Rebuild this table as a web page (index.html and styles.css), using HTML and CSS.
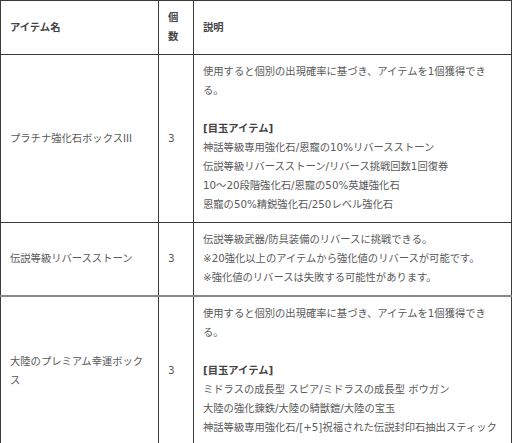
FILE: index.html
```html
<!DOCTYPE html>
<html lang="ja">
<head>
<meta charset="utf-8">
<link rel="stylesheet" href="styles.css">
</head>
<body>
<table class="items">
  <colgroup>
    <col class="c-name">
    <col class="c-qty">
    <col class="c-desc">
  </colgroup>
  <thead>
    <tr>
      <th>アイテム名</th>
      <th>個数</th>
      <th>説明</th>
    </tr>
  </thead>
  <tbody>
    <tr>
      <td>プラチナ強化石ボックスIII</td>
      <td>3</td>
      <td class="desc">使用すると個別の出現確率に基づき、アイテムを1個獲得できる。<br><br><b>[目玉アイテム]</b><br>神話等級専用強化石/恩寵の10%リバースストーン<br>伝説等級リバースストーン/リバース挑戦回数1回復券<br>10～20段階強化石/恩寵の50%英雄強化石<br>恩寵の50%精鋭強化石/250レベル強化石</td>
    </tr>
    <tr>
      <td>伝説等級リバースストーン</td>
      <td>3</td>
      <td class="desc">伝説等級武器/防具装備のリバースに挑戦できる。<br>※20強化以上のアイテムから強化値のリバースが可能です。<br>※強化値のリバースは失敗する可能性があります。</td>
    </tr>
    <tr class="last">
      <td>大陸のプレミアム幸運ボックス</td>
      <td>3</td>
      <td class="desc">使用すると個別の出現確率に基づき、アイテムを1個獲得できる。<br><br><b>[目玉アイテム]</b><br>ミドラスの成長型 スピア/ミドラスの成長型 ボウガン<br>大陸の強化錬鉄/大陸の騎獣鎧/大陸の宝玉<br>神話等級専用強化石/[+5]祝福された伝説封印石抽出スティック</td>
    </tr>
  </tbody>
</table>
</body>
</html>
```
FILE: styles.css
```css
html, body {
  margin: 0;
  padding: 0;
  background: #ffffff;
}
.items {
  border-collapse: collapse;
  width: 511px;
  table-layout: fixed;
  font-family: "DejaVu Sans", "Noto Sans CJK JP", sans-serif;
  font-size: 10.3px;
  line-height: 19px;
  color: #5a5a5a;
}
.c-name { width: 158px; }
.c-qty { width: 35px; }
.c-desc { width: 318px; }
.items th,
.items td {
  border: 1px solid #3a3a3a;
  padding: 7px 9px 8px 9px;
  text-align: left;
  vertical-align: middle;
}
.items th {
  font-weight: bold;
  color: #444444;
}
.items td.desc {
  vertical-align: top;
}
.items b {
  color: #444444;
}
.items tr.last td {
  border-top: 2px solid #8a8a8a;
}
```
